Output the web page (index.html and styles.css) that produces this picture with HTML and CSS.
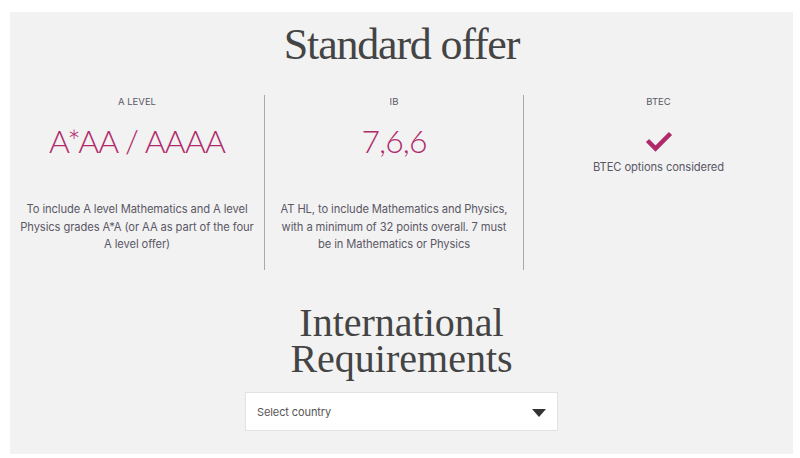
FILE: index.html
```html
<!DOCTYPE html>
<html lang="en">
<head>
<meta charset="utf-8">
<title>Standard offer</title>
<link rel="stylesheet" href="styles.css">
</head>
<body>
<section class="panel">
  <h2 class="title">Standard offer</h2>
  <div class="offers">
    <div class="offer">
      <div class="label">A LEVEL</div>
      <div class="grade">A*AA / AAAA</div>
      <p class="desc">To include A level Mathematics and A level Physics grades A*A (or AA as part of the four A level offer)</p>
    </div>
    <div class="offer">
      <div class="label">IB</div>
      <div class="grade">7,6,6</div>
      <p class="desc">AT HL, to include Mathematics and Physics, with a minimum of 32 points overall. 7 must be in Mathematics or Physics</p>
    </div>
    <div class="offer">
      <div class="label">BTEC</div>
      <svg class="check" width="28" height="22" viewBox="0 0 28 22"><polyline points="2.5,10.5 10.5,18.5 25.5,3.5" fill="none" stroke="#b02a6b" stroke-width="4.5"/></svg>
      <div class="btec">BTEC options considered</div>
    </div>
  </div>
  <h2 class="intl">International<br>Requirements</h2>
  <div class="select">
    <span>Select country</span>
    <span class="arrow"></span>
  </div>
</section>
</body>
</html>
```
FILE: styles.css
```css
html, body {
  margin: 0;
  padding: 0;
  background: #ffffff;
}
.panel {
  margin: 12px 7px 0 10px;
  width: 783px;
  height: 442px;
  box-sizing: border-box;
  padding-top: 11px;
  background: #f2f2f2;
  display: flex;
  flex-direction: column;
  align-items: center;
  font-family: "Inter", "Liberation Sans", sans-serif;
  color: #5b5866;
}
.title {
  margin: 0;
  font-family: "Liberation Serif", serif;
  font-weight: 400;
  font-size: 44px;
  line-height: 44px;
  letter-spacing: -1.2px;
  color: #444444;
}
.offers {
  margin-top: 28px;
  width: 100%;
  display: grid;
  grid-template-columns: 254px 259px 1fr;
  height: 175px;
}
.offer {
  display: flex;
  flex-direction: column;
  align-items: center;
  text-align: center;
}
.offer + .offer {
  border-left: 1px solid #a9a9a9;
}
.label {
  font-size: 9.5px;
  line-height: 14px;
}
.grade {
  margin-top: 12px;
  font-family: "Lato", "Liberation Sans", sans-serif;
  font-size: 32px;
  line-height: 40px;
  font-weight: 300;
  letter-spacing: -0.9px;
  color: #b02a6b;
}
.desc {
  margin: 40px 0 0;
  width: 234px;
  font-size: 11.2px;
  line-height: 17.5px;
  letter-spacing: -0.1px;
}
.check {
  margin-top: 21px;
  display: block;
}
.btec {
  margin-top: 7px;
  font-size: 11.2px;
  line-height: 16px;
  letter-spacing: -0.1px;
}
.intl {
  margin: 35px 0 0;
  font-family: "Liberation Serif", serif;
  font-weight: 400;
  font-size: 40px;
  line-height: 36px;
  text-align: center;
  color: #444444;
}
.select {
  margin-top: 15px;
  width: 313px;
  height: 39px;
  box-sizing: border-box;
  background: #ffffff;
  border: 1px solid #e2e2e2;
  display: flex;
  align-items: center;
  justify-content: space-between;
  padding: 0 11px 0 11px;
  font-size: 11px;
  letter-spacing: -0.1px;
  color: #555555;
}
.arrow {
  width: 0;
  height: 0;
  border-left: 7.5px solid transparent;
  border-right: 7.5px solid transparent;
  border-top: 8px solid #333333;
  margin-top: 2px;
}
```
